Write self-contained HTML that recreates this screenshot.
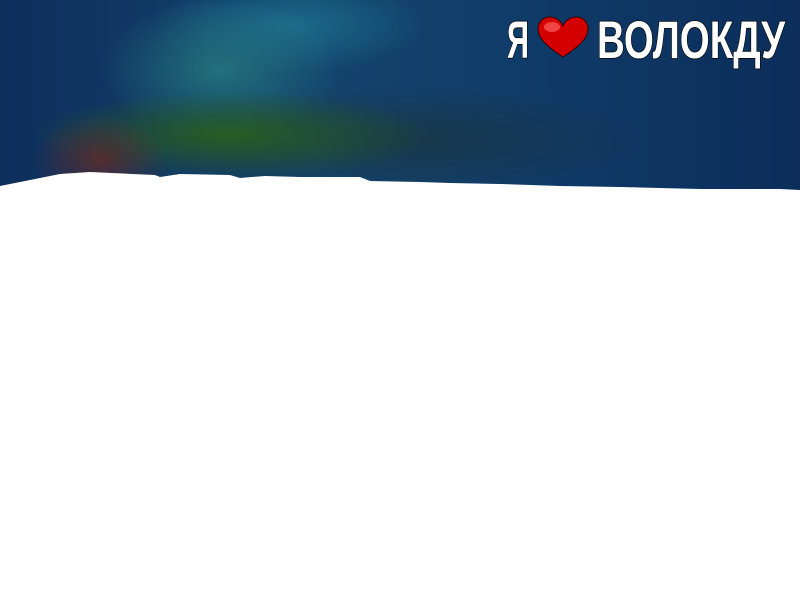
<!DOCTYPE html>
<html><head><meta charset="utf-8"><style>
html,body{margin:0;padding:0;width:800px;height:600px;overflow:hidden;background:#fff}
.sky{position:absolute;left:0;top:0;width:800px;height:200px;
background:
radial-gradient(ellipse 90px 60px at 100px 160px,rgba(110,40,30,.7),transparent 75%),
radial-gradient(ellipse 250px 55px at 230px 135px,rgba(40,95,30,.95),transparent 80%),
radial-gradient(ellipse 150px 90px at 220px 70px,rgba(40,130,130,.75),transparent 80%),
radial-gradient(ellipse 170px 60px at 290px 25px,rgba(30,120,150,.75),transparent 80%),
radial-gradient(ellipse 320px 70px at 400px 140px,rgba(30,50,50,.6),transparent 80%),
linear-gradient(90deg,#0e2e5c 0%,#13446e 40%,#0f3a68 70%,#0c2d5a 100%);}
</style></head><body>
<div class="sky"></div>
<svg style="position:absolute;left:0;top:0" width="800" height="600">
<polygon fill="#fff" points="0,186 30,180 60,174 90,172 155,175 160,177 180,174 230,175 240,178 265,176 300,177 360,177 370,181 420,182 450,183 500,184 560,186 620,187 700,189 780,189 800,190 800,600 0,600"/>
<g font-family="Liberation Sans, sans-serif" font-weight="bold" font-size="53" fill="#fff" stroke="#000" stroke-width="1.5" paint-order="stroke">
<text x="507" y="58" textLength="22" lengthAdjust="spacingAndGlyphs">Я</text>
<text x="597" y="58" textLength="188" lengthAdjust="spacingAndGlyphs">ВОЛОКДУ</text>
</g>
<g transform="translate(538,17)">
<path d="M25 40 C10 30 0 22 0 12 C0 4 6 0 12 0 C18 0 23 4 25 9 C27 4 32 0 38 0 C45 0 50 5 50 12 C50 22 40 30 25 40Z" fill="#d40000" stroke="#300" stroke-width="1"/>
<ellipse cx="14" cy="10" rx="8" ry="5" fill="#ff6060" opacity=".7"/>
</g>
</svg>
</body></html>
